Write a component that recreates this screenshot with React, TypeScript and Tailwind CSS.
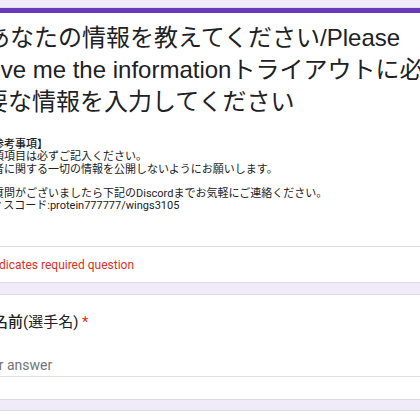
export default function App() {
  const desc = [
    "【参考事項】",
    "必須項目は必ずご記入ください。",
    "他者に関する一切の情報を公開しないようにお願いします。",
    "",
    "ご質問がございましたら下記のDiscordまでお気軽にご連絡ください。",
    "ディスコード:protein777777/wings3105",
  ];

  return (
    <div className="w-[420px] h-[420px] overflow-hidden bg-[#f0ebf8] text-[#202124]">
      {/* Header card */}
      <div className="h-[8px] border-b border-[#e2dcea]" />
      <div className="h-[5px] bg-[#673ab7]" />
      <div className="h-[234px] bg-white border-b border-[#dadce0] pt-[9px]">
        <div
          className="-ml-[14px] text-[24px] leading-[32px] whitespace-nowrap"
          style={{ fontFamily: '"Liberation Sans", "Noto Sans CJK JP", sans-serif' }}
        >
          <div>あなたの情報を教えてください/Please</div>
          <div className="-ml-[4px]">give me the informationトライアウトに必</div>
          <div className="-ml-[2px]">要な情報を入力してください</div>
        </div>
        <div
          className="-ml-[18px] mt-[21px] text-[11px] leading-[12.3px] whitespace-nowrap"
          style={{ fontFamily: 'Roboto, "Noto Sans CJK JP", sans-serif' }}
        >
          {desc.map((line, i) => (
            <div key={i} className={i === 0 ? "font-medium h-[12.3px]" : "h-[12.3px]"}>
              {line}
            </div>
          ))}
        </div>
      </div>

      {/* Required note */}
      <div
        className="h-[36px] bg-white border-b border-[#dadce0] flex items-center -ml-[19px] text-[12px] text-[#d93025]"
        style={{ fontFamily: 'Roboto, "Noto Sans CJK JP", sans-serif' }}
      >
        <span className="whitespace-nowrap">* Indicates required question</span>
      </div>

      <div className="h-[11px]" />

      {/* Question card */}
      <div
        className="h-[106px] bg-white border-t border-b border-[#dadce0]"
        style={{ fontFamily: 'Roboto, "Noto Sans CJK JP", sans-serif' }}
      >
        <div className="-ml-[22px] pt-[17px] text-[15px] leading-[20px] whitespace-nowrap">
          <span className="font-medium">お名前</span>
          <span>(選手名)</span>
          <span className="text-[#d93025]"> *</span>
        </div>
        <div className="mt-[16px] border-b border-[#e0e0e0] h-[29px] flex items-end pb-[2px] -ml-[25px]">
          <span className="text-[14px] leading-[18px] text-[#70757a] whitespace-nowrap">Your answer</span>
        </div>
      </div>

      <div className="h-[10px]" />
      <div className="h-[20px] bg-white border-t border-[#dadce0]" />
    </div>
  );
}
